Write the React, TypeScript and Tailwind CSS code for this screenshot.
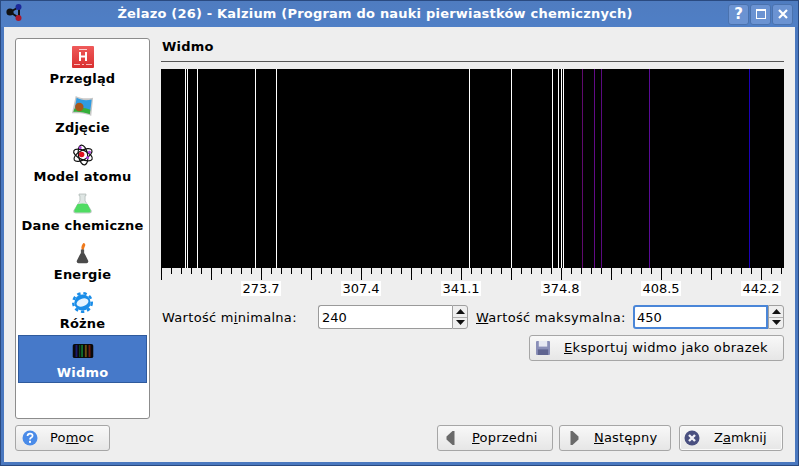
import React from 'react';

const font = { fontFamily: '"DejaVu Sans", sans-serif' };

const whiteLines = [185, 187, 197, 255, 276, 469, 511, 552, 558, 561, 563];
const colorLines: [number, string][] = [
  [582, '#5f0a6e'],
  [594, '#620a86'],
  [601, '#5a0a80'],
  [649, '#5a0a96'],
  [749, '#1a00b8'],
];
const labels: [number, string][] = [
  [261, '273.7'],
  [361, '307.4'],
  [461, '341.1'],
  [561, '374.8'],
  [661, '408.5'],
  [761, '442.2'],
];

function Spectrum() {
  const ticks = [];
  for (let x = 161, i = 0; x < 784; x += 10, i++) ticks.push({ x: x + 0.5, major: i % 5 === 0 });
  return (
    <svg width="623" height="228" viewBox="161 69 623 228" className="block shrink-0">
      <rect x="161" y="69" width="623" height="199" fill="#000" />
      {whiteLines.map((x) => (
        <rect key={x} x={x} y="69" width="1" height="199" fill="#fff" />
      ))}
      {colorLines.map(([x, c]) => (
        <rect key={x} x={x} y="69" width="1" height="199" fill={c} />
      ))}
      {ticks.map((t) => (
        <line key={t.x} x1={t.x} x2={t.x} y1="268" y2={t.major ? 280 : 274} stroke="#000" />
      ))}
      {labels.map(([x, s]) => (
        <g key={s}>
          <rect x={x - 20} y="281" width="40" height="15" fill="#fff" />
          <text x={x} y="293" textAnchor="middle" fontSize="13" fill="#000" style={font}>
            {s}
          </text>
        </g>
      ))}
    </svg>
  );
}

function AppIcon() {
  return (
    <svg width="22" height="22" viewBox="0 0 22 22">
      <path d="M5 9 L14 4 M5 9 L14 15 M14 4 V15" stroke="#111" strokeWidth="2" />
      <circle cx="5" cy="9" r="3.6" fill="#111" />
      <circle cx="13.5" cy="4" r="3" fill="#1c2a9a" />
      <circle cx="13.5" cy="15" r="3" fill="#a8182c" />
    </svg>
  );
}

function HIcon() {
  return (
    <svg width="22" height="22" viewBox="0 0 22 22">
      <defs>
        <linearGradient id="h" x1="0" y1="0" x2="0" y2="1">
          <stop offset="0" stopColor="#ef5a5a" />
          <stop offset="1" stopColor="#d92f2f" />
        </linearGradient>
      </defs>
      <rect x="0" y="0" width="22" height="22" rx="1" fill="url(#h)" />
      <rect x="7" y="3" width="8" height="1" fill="#fbd0d0" />
      <path d="M8 6 V15 M14 6 V15 M8 10.5 H14" stroke="#fff" strokeWidth="2" fill="none" />
      <path d="M2 18.5 H8 M10 18.5 H12 M14 18.5 H20" stroke="#f8b8b8" strokeWidth="1" />
    </svg>
  );
}

function PhotoIcon() {
  return (
    <svg width="22" height="22" viewBox="0 0 24 24">
      <path d="M4 1 C9 4 16 4 23 3 L21 23 C15 20 8 20 0 20 Z" fill="#c8c8c8" />
      <path d="M5 3 C10 6 16 6 21.5 5 L20 17 C14 15 8 15 3 15 Z" fill="#2f9be0" />
      <path d="M2.5 15 C8 13 15 14 20 16 L19.5 21 C14 19 8 18 1.5 18.5 Z" fill="#35b03a" />
      <circle cx="8" cy="13" r="4.6" fill="#a8561a" />
    </svg>
  );
}

function AtomIcon() {
  return (
    <svg width="22" height="22" viewBox="0 0 24 24" fill="none">
      <ellipse cx="12" cy="12" rx="11" ry="5" stroke="#111" strokeWidth="1.3" transform="rotate(25 12 12)" />
      <ellipse cx="12" cy="12" rx="11" ry="5" stroke="#111" strokeWidth="1.3" transform="rotate(-30 12 12)" />
      <ellipse cx="12" cy="12" rx="11" ry="5" stroke="#111" strokeWidth="1.3" transform="rotate(80 12 12)" />
      <circle cx="10.5" cy="11.5" r="3" fill="#e01020" />
      <circle cx="19" cy="9" r="1.6" fill="#b040e0" />
      <circle cx="17" cy="15" r="1.6" fill="#b040e0" />
      <circle cx="9" cy="4" r="1.6" fill="#b040e0" />
    </svg>
  );
}

function FlaskIcon() {
  return (
    <svg width="19" height="21" viewBox="0 0 22 24" className="-mt-[2px]">
      <path d="M7 1 H15 V3 H14 V9 L21 20 Q22 23 19 23 H3 Q0 23 1 20 L8 9 V3 H7 Z" fill="#dfe6e4" stroke="#a9b3b0" strokeWidth="0.8" />
      <path d="M5 13 Q11 11 17 13 L20.5 20 Q21 22.5 19 22.5 H3 Q1 22.5 1.5 20 Z" fill="#4fdc62" />
    </svg>
  );
}

function BurnerIcon() {
  return (
    <svg width="13" height="23" viewBox="0 0 16 26">
      <path d="M9 0 C13 1 11 4 10.5 5 C10 7 10 8 8 9 C6 7 6 4 9 0 Z" fill="#f07a1c" />
      <rect x="6" y="8" width="4" height="6" fill="#555" />
      <path d="M5.5 13 H10.5 L15 22 Q15.5 25 13 25 H3 Q0.5 25 1 22 Z" fill="#4a4a4a" />
    </svg>
  );
}

function GearIcon() {
  return (
    <svg width="21" height="21" viewBox="0 0 22 22">
      <circle cx="11" cy="11" r="8.5" fill="#1a8de8" />
      <circle cx="11" cy="11" r="9.7" fill="none" stroke="#1a8de8" strokeWidth="2.6" strokeDasharray="3.6 3.02" />
      <ellipse cx="11" cy="11" rx="6.5" ry="4" fill="#e6f4ff" transform="rotate(-20 11 11)" />
    </svg>
  );
}

function SpectrumIcon() {
  return (
    <svg width="22" height="14" viewBox="0 0 22 15">
      <rect width="22" height="15" rx="2" fill="#0a0a0a" />
      <rect x="3" y="1" width="2" height="13" fill="#1a1a70" />
      <rect x="7" y="1" width="1" height="13" fill="#125a20" />
      <rect x="9" y="1" width="2" height="13" fill="#0f6a2a" />
      <rect x="13" y="1" width="2" height="13" fill="#6a5010" />
      <rect x="17" y="1" width="2" height="13" fill="#701a10" />
    </svg>
  );
}

function HelpIcon() {
  return (
    <svg width="16" height="16" viewBox="0 0 16 16">
      <circle cx="8" cy="8" r="7.5" fill="#4a8be8" />
      <path d="M5.5 6 Q5.7 3.6 8 3.6 Q10.6 3.6 10.6 5.8 Q10.6 7 9 7.8 Q8 8.4 8 9.6" fill="none" stroke="#fff" strokeWidth="1.7" />
      <rect x="7" y="10.8" width="2" height="2" fill="#fff" />
    </svg>
  );
}

function FloppyIcon() {
  return (
    <svg width="14" height="14" viewBox="0 0 15 15">
      <rect width="15" height="15" rx="1" fill="#8a8fb8" />
      <rect x="3" y="0" width="9" height="6" fill="#e6e8f2" />
      <rect x="2" y="9" width="11" height="6" fill="#5f6490" />
    </svg>
  );
}

function CloseIcon() {
  return (
    <svg width="16" height="16" viewBox="0 0 16 16">
      <circle cx="8" cy="8" r="7.5" fill="#4a5080" />
      <path d="M5 5 L11 11 M11 5 L5 11" stroke="#f2f2f6" strokeWidth="2.4" />
    </svg>
  );
}

function Arrow({ dir }: { dir: 'left' | 'right' }) {
  return (
    <svg width="9" height="14" viewBox="0 0 8 14">
      <path d={dir === 'left' ? 'M8 0 V14 H6 L0 8.5 V5.5 L6 0 Z' : 'M0 0 V14 H2 L8 8.5 V5.5 L2 0 Z'} fill="#6a6a6a" />
    </svg>
  );
}

function SideItem({ icon, label, active }: { icon: React.ReactNode; label: string; active?: boolean }) {
  return (
    <div
      className={`h-[48px] flex flex-col items-center shrink-0 border ${
        active ? 'bg-[#4679c9] border-[#2f5a9c] text-white' : 'border-transparent text-black'
      }`}
    >
      <div className="h-[28px] flex items-center justify-center pt-[2px]">{icon}</div>
      <div className="text-[13px] leading-[17px] font-bold tracking-[0.2px] whitespace-nowrap">{label}</div>
    </div>
  );
}

function Button({ className, textClass, icon, children }: { className: string; textClass: string; icon: React.ReactNode; children: React.ReactNode }) {
  return (
    <div
      className={`h-[26px] flex items-center rounded-[3px] border border-[#a6a6a6] bg-gradient-to-b from-[#f8f8f8] to-[#e6e6e6] text-[13px] text-black ${className}`}
    >
      {icon}
      <span className={`whitespace-nowrap ${textClass}`}>{children}</span>
    </div>
  );
}

function Arrows() {
  return (
    <div className="w-[16px] flex flex-col bg-[#efefef] border border-[#a0a0a0] rounded-r-[3px]">
      <div className="flex-1 flex items-center justify-center border-b border-[#b0b0b0]">
        <svg width="9" height="5" viewBox="0 0 9 5"><path d="M4.5 0 L9 5 H0 Z" fill="#111" /></svg>
      </div>
      <div className="flex-1 flex items-center justify-center">
        <svg width="9" height="5" viewBox="0 0 9 5"><path d="M4.5 5 L9 0 H0 Z" fill="#111" /></svg>
      </div>
    </div>
  );
}

function SpinBox({ value, focus, className }: { value: string; focus?: boolean; className: string }) {
  return (
    <div className={`h-[24px] flex ${className}`}>
      {focus ? (
        <div className="flex-1 text-[13px] leading-[20px] pl-[2px] pt-[1px] bg-white border-2 border-[#4a86d8] rounded-l-[3px]">
          {value}
        </div>
      ) : (
        <div className="flex-1 text-[13px] leading-[22px] pl-[3px] pt-[1px] bg-white border border-r-0 border-[#9a9a9a] rounded-l-[3px]">
          {value}
        </div>
      )}
      <Arrows />
    </div>
  );
}

function WinButton({ children }: { children: React.ReactNode }) {
  return (
    <div className="w-[21px] h-[21px] flex items-center justify-center rounded-[3px] border border-[#4a72ae] bg-[#6b93d2] text-white">
      {children}
    </div>
  );
}

export default function App() {
  return (
    <div style={font} className="w-[799px] h-[466px] flex flex-col bg-[#4a78bf] overflow-hidden border border-[#2a4a80]">
      <div className="h-[26px] shrink-0 flex items-center bg-gradient-to-b from-[#4f7cc0] to-[#4f7fc6] pl-[4px] pr-[5px]">
        <AppIcon />
        <div className="flex-1 text-center text-white font-bold text-[13px] tracking-[0.2px] whitespace-nowrap pr-[5px]">
          Żelazo (26) - Kalzium (Program do nauki pierwiastków chemicznych)
        </div>
        <div className="flex gap-[1px]">
          <WinButton>
            <span className="font-bold text-[15px] leading-none">?</span>
          </WinButton>
          <WinButton>
            <span className="block w-[10px] h-[10px] border-x border-b border-t-2 border-white" />
          </WinButton>
          <WinButton>
            <svg width="10" height="10" viewBox="0 0 10 10"><path d="M1 1 L9 9 M9 1 L1 9" stroke="#fff" strokeWidth="2.2" /></svg>
          </WinButton>
        </div>
      </div>

      <div className="mx-[3px] mb-[3px] flex-1 min-h-0 bg-[#eeeeee] pt-[11px] pb-[9px] pl-[11px] pr-[11px] flex flex-col">
        <div className="flex gap-[11px] h-[381px]">
          <div className="w-[135px] shrink-0 bg-white border border-[#8c8c8c] rounded-[3px] px-[2px] pt-[2px] flex flex-col gap-[1px]">
            <SideItem icon={<HIcon />} label="Przegląd" />
            <SideItem icon={<PhotoIcon />} label="Zdjęcie" />
            <SideItem icon={<AtomIcon />} label="Model atomu" />
            <SideItem icon={<FlaskIcon />} label="Dane chemiczne" />
            <SideItem icon={<BurnerIcon />} label="Energie" />
            <SideItem icon={<GearIcon />} label="Różne" />
            <SideItem icon={<SpectrumIcon />} label="Widmo" active />
          </div>

          <div className="flex-1 min-w-0 flex flex-col">
            <div className="h-[23px] pl-[1px] font-bold text-[13px] leading-[18px] text-black border-b border-[#555555] box-content tracking-[0.2px]">
              Widmo
            </div>
            <div className="h-[7px]" />
            <Spectrum />
            <div className="mt-[8px] h-[24px] flex items-center text-[13px] text-black tracking-[0.3px]">
              <div className="w-[157px] pl-[1px] pt-[1px] whitespace-nowrap">
                Wartość m<u>i</u>nimalna:
              </div>
              <SpinBox value="240" className="w-[150px] tracking-normal" />
              <div className="flex-1 pl-[8px] pt-[1px] whitespace-nowrap">
                <u>W</u>artość maksymalna:
              </div>
              <SpinBox value="450" focus className="w-[151px] tracking-normal" />
            </div>
            <div className="mt-[6px] flex justify-end">
              <Button className="w-[255px] pl-[6px]" textClass="ml-[14px] tracking-[0.32px]" icon={<FloppyIcon />}>
                <u>E</u>ksportuj widmo jako obrazek
              </Button>
            </div>
          </div>
        </div>

        <div className="mt-[6px] flex items-center">
          <Button className="w-[95px] pl-[6px]" textClass="ml-[12px] tracking-[0.2px]" icon={<HelpIcon />}>
            Po<u>m</u>oc
          </Button>
          <div className="flex-1" />
          <Button className="w-[116px] pl-[8px]" textClass="ml-[17px] tracking-[0.2px]" icon={<Arrow dir="left" />}>
            <u>P</u>oprzedni
          </Button>
          <Button className="w-[112px] ml-[6px] pl-[10px]" textClass="ml-[15px] tracking-[0.2px]" icon={<Arrow dir="right" />}>
            <u>N</u>astępny
          </Button>
          <Button
            className="w-[104px] ml-[8px] pl-[4px] border-[#808080] shadow-[inset_0_0_0_1px_#fafafa] mr-[1px]"
            textClass="ml-[14px]"
            icon={<CloseIcon />}
          >
            Z<u>a</u>mknij
          </Button>
        </div>
      </div>
    </div>
  );
}
